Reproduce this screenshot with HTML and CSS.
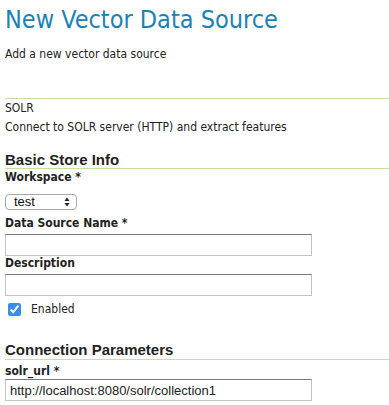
FILE: index.html
```html
<!DOCTYPE html>
<html lang="en">
<head>
    <meta charset="UTF-8">
    <title>New Vector Data Source</title>
    <link rel="stylesheet" href="styles.css">
</head>
<body>
    <div class="page">
        <h1 class="title">New Vector Data Source</h1>
        <p class="subtitle">Add a new vector data source</p>

        <div class="store-type">
            <div class="type-name">SOLR</div>
            <div class="type-desc">Connect to SOLR server (HTTP) and extract features</div>
        </div>

        <form class="store-form">
            <h3 class="section">Basic Store Info</h3>

            <label class="field-label" for="workspace">Workspace *</label>
            <div class="select-wrap">
                <select id="workspace" class="select">
                    <option>test</option>
                </select>
                <svg class="select-arrows" width="6" height="10" viewBox="0 0 6 10">
                    <path d="M3 0.5 L5.5 4 H0.5 Z M3 9.5 L5.5 6 H0.5 Z" fill="#222"/>
                </svg>
            </div>

            <label class="field-label" for="name">Data Source Name *</label>
            <input type="text" id="name" class="text-input">

            <label class="field-label" for="description">Description</label>
            <input type="text" id="description" class="text-input">

            <div class="check-row">
                <input type="checkbox" id="enabled" checked>
                <label for="enabled">Enabled</label>
            </div>

            <h3 class="section section-params">Connection Parameters</h3>

            <label class="field-label label-param" for="solr_url">solr_url *</label>
            <input type="text" id="solr_url" class="text-input input-param" value="http://localhost:8080/solr/collection1">
        </form>
    </div>
</body>
</html>
```

FILE: styles.css
```css
body {
    margin: 0;
    padding: 0;
    background-color: white;
    font-family: "DejaVu Sans Condensed", "DejaVu Sans", sans-serif;
    font-size: 12px;
    color: #222;
}

.page {
    padding: 0 0 0 5px;
}

.title {
    margin: 0;
    padding-top: 4px;
    font-size: 25px;
    font-weight: normal;
    color: #1b82b8;
    line-height: 32px;
}

.subtitle {
    margin: 10px 0 0;
    line-height: 16px;
}

.store-type {
    margin-top: 36px;
    border-top: 1px solid #c5e0a3;
}

.type-name,
.type-desc {
    line-height: 19px;
}

.section {
    margin: 14px 0 0;
    font-family: "Liberation Sans", Arial, sans-serif;
    font-size: 15px;
    line-height: 17px;
    color: #222;
    border-bottom: 1px solid #c5e0a3;
}

.section-params {
    margin-top: 25px;
    padding-bottom: 1px;
}

.field-label {
    display: block;
    font-weight: bold;
    line-height: 14px;
    margin-top: 1px;
}

.select-wrap {
    position: relative;
    display: inline-block;
    margin: 10px 0 5px;
    vertical-align: top;
}

.select {
    display: block;
    appearance: none;
    -webkit-appearance: none;
    width: 72px;
    height: 16px;
    margin: 0;
    padding: 0 0 0 8px;
    font-family: "Liberation Sans", Arial, sans-serif;
    font-size: 13px;
    line-height: 14px;
    color: #111;
    border: 1px solid #a8a8a8;
    border-radius: 4px;
    background: white;
}

.select-arrows {
    position: absolute;
    right: 7px;
    top: 3px;
    pointer-events: none;
}

.field-label + .text-input {
    margin-top: 4px;
}

.text-input {
    display: block;
    box-sizing: border-box;
    width: 307px;
    height: 22px;
    margin: 4px 0 0;
    padding: 2px 4px;
    border: 1px solid #c4c4c4;
    border-top-color: #7a7a7a;
    border-radius: 0;
    font-family: "Liberation Sans", Arial, sans-serif;
    font-size: 13px;
    color: #222;
}

.field-label + .text-input + .field-label {
    margin-top: 0;
}

.check-row {
    display: flex;
    align-items: center;
    gap: 10px;
    margin-top: 6px;
    padding-left: 3px;
    line-height: 14px;
}

.check-row input {
    margin: 0;
    width: 13px;
    height: 13px;
    accent-color: #3b8cf0;
}

.label-param {
    margin-top: 4px;
}

.field-label + .input-param {
    margin-top: 1px;
}
```
